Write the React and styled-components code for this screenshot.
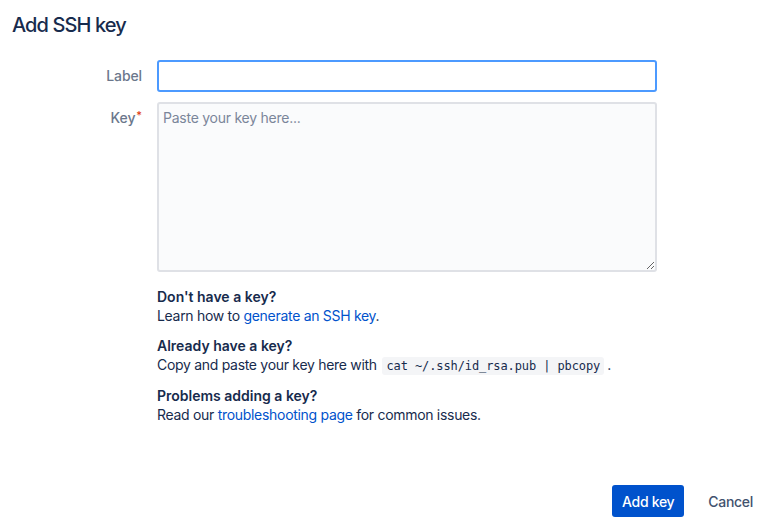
import React from "react";
import styled, { createGlobalStyle } from "styled-components";

const GlobalStyle = createGlobalStyle`
    html, body {
        margin: 0;
        padding: 0;
        background: #fff;
    }
    body {
        font-family: Inter, "Noto Sans", "Liberation Sans", sans-serif;
        color: #172B4D;
        font-size: 14px;
        letter-spacing: -0.3px;
    }
`;

const Dialog = styled.div`
    display: flex;
    flex-direction: column;
    width: 761px;
    height: 524px;
    box-sizing: border-box;
    padding: 13px 0 0 12px;
`;

const Title = styled.h1`
    margin: 0;
    font-size: 20px;
    line-height: 24px;
    font-weight: 500;
    letter-spacing: -0.9px;
    color: #172B4D;
`;

const Form = styled.div`
    display: grid;
    grid-template-columns: 130px 500px;
    column-gap: 15px;
    row-gap: 10px;
    margin-top: 23px;
`;

const FieldLabel = styled.label`
    text-align: right;
    font-size: 14px;
    font-weight: 500;
    letter-spacing: -0.1px;
    color: #6B778C;
    line-height: 20px;
    padding-top: ${p => p.$top}px;
`;

const Required = styled.span`
    color: #DE350B;
    font-size: 11px;
    vertical-align: top;
    position: relative;
    top: -3px;
    margin-left: 1px;
`;

const TextInput = styled.input`
    box-sizing: border-box;
    width: 100%;
    height: 32px;
    border: 2px solid #4C9AFF;
    border-radius: 3px;
    padding: 4px;
    font: inherit;
    font-size: 14px;
    color: #172B4D;
    background: #fff;
    outline: none;
`;

const TextArea = styled.textarea`
    box-sizing: border-box;
    width: 100%;
    height: 170px;
    border: 2px solid #DFE1E6;
    border-radius: 3px;
    padding: 4px;
    font: inherit;
    font-size: 14px;
    line-height: 20px;
    letter-spacing: -0.25px;
    background: #FAFBFC;
    color: #172B4D;
    resize: vertical;
    outline: none;
    &::placeholder {
        color: #7A869A;
    }
`;

const Help = styled.div`
    grid-column: 2;
    display: flex;
    flex-direction: column;
    gap: 11px;
    margin-top: 6px;
`;

const HelpBlock = styled.div`
    display: flex;
    flex-direction: column;
`;

const HelpTitle = styled.div`
    font-weight: 600;
    line-height: 18px;
    letter-spacing: 0;
`;

const HelpText = styled.div`
    line-height: 20px;
`;

const Link = styled.a`
    color: #0052CC;
    text-decoration: none;
`;

const Code = styled.code`
    font-family: "DejaVu Sans Mono", "Liberation Mono", monospace;
    font-size: 12px;
    letter-spacing: -0.1px;
    background: #F4F5F7;
    border-radius: 3px;
    padding: 2px 4px;
    margin: 0 3px 0 2px;
`;

const Footer = styled.div`
    display: flex;
    justify-content: flex-end;
    align-items: center;
    gap: 16px;
    margin-top: auto;
    margin-bottom: 7px;
`;

const Button = styled.button`
    height: 32px;
    border: none;
    border-radius: 3px;
    font: inherit;
    font-size: 14px;
    font-weight: 500;
    letter-spacing: -0.3px;
    padding: 0 ${p => (p.$primary ? 10 : 8)}px;
    background: ${p => (p.$primary ? "#0052CC" : "transparent")};
    color: ${p => (p.$primary ? "#fff" : "#42526E")};
    cursor: pointer;
`;

export default function App() {
    return (
        <>
            <GlobalStyle />
            <Dialog>
                <Title>Add SSH key</Title>
                <Form>
                    <FieldLabel $top={6}>Label</FieldLabel>
                    <TextInput autoFocus />
                    <FieldLabel $top={6}>
                        Key<Required>*</Required>
                    </FieldLabel>
                    <TextArea placeholder="Paste your key here..." />
                    <Help>
                        <HelpBlock>
                            <HelpTitle>Don't have a key?</HelpTitle>
                            <HelpText>
                                Learn how to <Link href="#">generate an SSH key</Link>.
                            </HelpText>
                        </HelpBlock>
                        <HelpBlock>
                            <HelpTitle>Already have a key?</HelpTitle>
                            <HelpText>
                                Copy and paste your key here with <Code>cat ~/.ssh/id_rsa.pub | pbcopy</Code>.
                            </HelpText>
                        </HelpBlock>
                        <HelpBlock>
                            <HelpTitle>Problems adding a key?</HelpTitle>
                            <HelpText>
                                Read our <Link href="#">troubleshooting page</Link> for common issues.
                            </HelpText>
                        </HelpBlock>
                    </Help>
                </Form>
                <Footer>
                    <Button $primary>Add key</Button>
                    <Button>Cancel</Button>
                </Footer>
            </Dialog>
        </>
    );
}
